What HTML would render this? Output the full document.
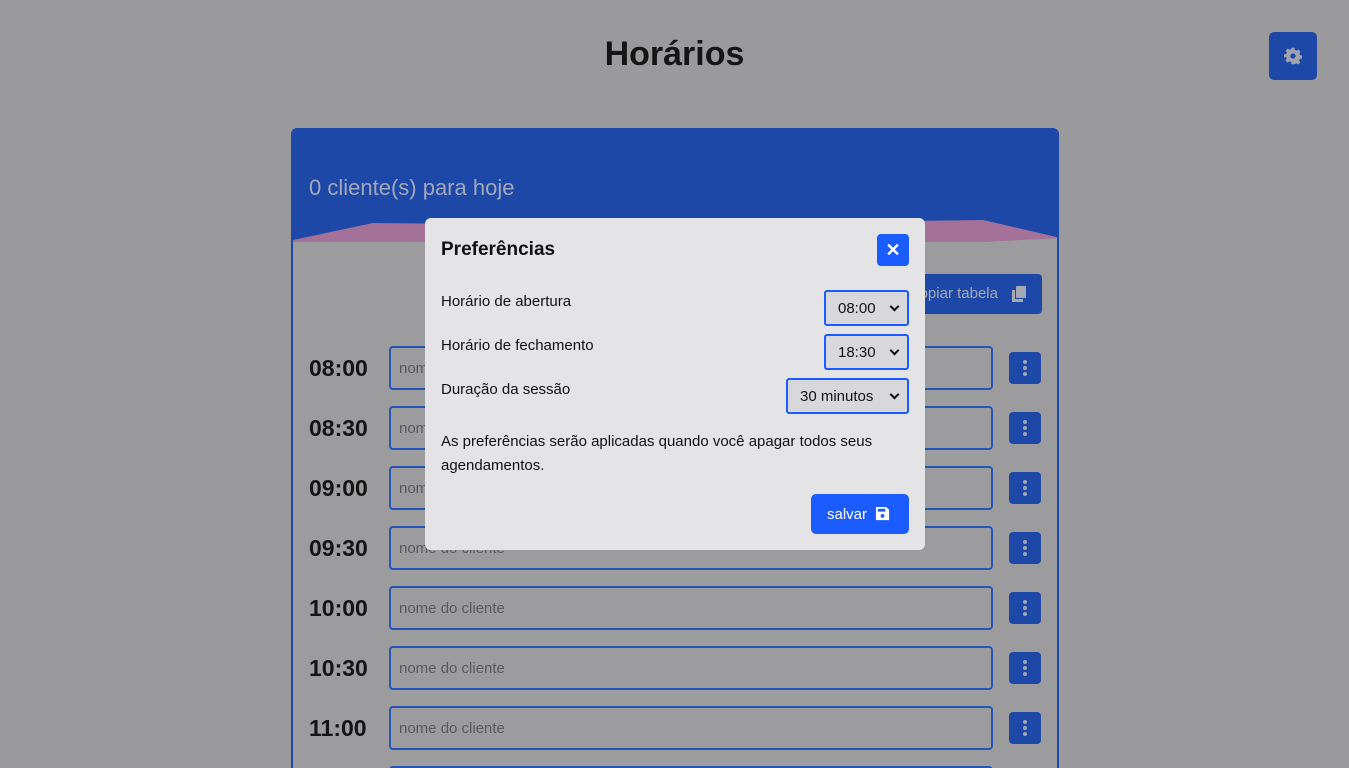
<!DOCTYPE html>
<html><head><meta charset="utf-8"><style>
*{box-sizing:border-box}
html,body{margin:0;width:1349px;height:768px;overflow:hidden}
body{background:#9a9a9c;font-family:"Liberation Sans",sans-serif;position:relative}
h1{position:absolute;left:0;right:0;top:35px;margin:0;text-align:center;font-size:34px;font-weight:bold;color:#151515}
.gear{position:absolute;left:1269px;top:32px;width:48px;height:48px;background:#1d48a8;border-radius:5px;display:flex;align-items:center;justify-content:center}
.card{position:absolute;left:291px;top:128px;width:768px;height:700px;border:2px solid #1d48a8;border-radius:6px;background:#9c9c9e;overflow:hidden}
.head{position:absolute;left:0;top:0;width:100%;height:112px;background:#1d48a8}
.head span{position:absolute;left:16px;top:45px;font-size:22px;color:#a3a8b8}
.wave{position:absolute;left:0;top:90px}
.copy{position:absolute;left:600px;top:144px;width:149px;height:40px;background:#1d48a8;border-radius:4px;color:#a5a8b5;font-size:15px;line-height:40px;text-align:right;padding-right:44px}
.copy svg{position:absolute;right:16px;top:12px}
.row{position:absolute;left:0;width:100%;height:44px}
.row b{position:absolute;left:16px;top:9px;font-size:23px;color:#141414}
.row .in{position:absolute;left:96px;top:0;width:604px;height:44px;border:2px solid #2456b8;border-radius:4px;color:#5a5a5c;font-size:15px;padding:12px 8px}
.row .dots{position:absolute;left:716px;top:6px;width:32px;height:32px;background:#1d48a8;border-radius:4px}
.row .dots i{position:absolute;left:14px;width:4px;height:4px;border-radius:2px;background:#a0a4b0}
.modal{position:absolute;left:425px;top:218px;width:500px;height:332px;background:#e4e4e6;border-radius:6px;color:#111}
.modal .t{position:absolute;left:16px;top:21px;font-size:19px;font-weight:bold}
.x{position:absolute;left:452px;top:16px;width:32px;height:32px;background:#1a5cff;border-radius:4px;color:#fff;font-weight:bold;text-align:center;line-height:32px;font-size:18px}
.lab{position:absolute;left:16px;font-size:15px}
.sel{position:absolute;height:36px;border:2px solid #1a5cff;border-radius:3px;background:#d8d8dc;font-size:15px;line-height:33px;padding-left:12px}
.sel:after{content:"";position:absolute;right:9px;top:11px;width:5px;height:5px;border-right:2px solid #111;border-bottom:2px solid #111;transform:rotate(45deg)}
.note{position:absolute;left:16px;top:212px;width:470px;font-size:15px;line-height:24px}
.save{position:absolute;left:386px;top:276px;width:98px;height:40px;background:#1a5cff;border-radius:5px;color:#fff;font-size:15px;line-height:41px;padding-left:16px}
</style></head><body>
<h1>Horários</h1>
<div class="gear"><svg width="18" height="18" viewBox="0 0 24 24"><path fill="#a0a3ad" d="M10 1h4l.6 3 2 1 2.6-1.6 2.8 2.8L20.4 8.8l1 2 2.6.6v4l-3 .6-.8 2 1.6 2.6-2.8 2.8-2.6-1.6-2 .8L14 23h-4l-.6-3-2-.8-2.6 1.6-2.8-2.8 1.6-2.6-.8-2L0 14v-4l3-.6.8-2L2.2 4.8 5 2 7.6 3.6l2-.8z"/><circle cx="12" cy="12" r="3.5" fill="#1d48a8"/></svg></div>
<div class="card">
<div class="head"><span>0 cliente(s) para hoje</span></div>
<svg class="wave" width="768" height="30"><path d="M0 20 L80 3 L300 5 L690 0 L768 18 L768 30 L0 30Z" fill="#a47198"/><path d="M0 22 L80 22 L300 22 L690 22 L768 18 L768 30 L0 30Z" fill="#9c9c9e"/></svg>
<div class="copy">opiar tabela<svg width="14" height="16" viewBox="0 0 14 16"><rect x="4" y="0" width="10" height="12" rx="1" fill="#a5a8b5"/><path d="M0 4h3v9h8v3H0z" fill="#a5a8b5"/></svg></div>
<div class="row" style="top:216px"><b>08:00</b><div class="in">nome do cliente</div><div class="dots"><i style="top:8px"></i><i style="top:14px"></i><i style="top:20px"></i></div></div>
<div class="row" style="top:276px"><b>08:30</b><div class="in">nome do cliente</div><div class="dots"><i style="top:8px"></i><i style="top:14px"></i><i style="top:20px"></i></div></div>
<div class="row" style="top:336px"><b>09:00</b><div class="in">nome do cliente</div><div class="dots"><i style="top:8px"></i><i style="top:14px"></i><i style="top:20px"></i></div></div>
<div class="row" style="top:396px"><b>09:30</b><div class="in">nome do cliente</div><div class="dots"><i style="top:8px"></i><i style="top:14px"></i><i style="top:20px"></i></div></div>
<div class="row" style="top:456px"><b>10:00</b><div class="in">nome do cliente</div><div class="dots"><i style="top:8px"></i><i style="top:14px"></i><i style="top:20px"></i></div></div>
<div class="row" style="top:516px"><b>10:30</b><div class="in">nome do cliente</div><div class="dots"><i style="top:8px"></i><i style="top:14px"></i><i style="top:20px"></i></div></div>
<div class="row" style="top:576px"><b>11:00</b><div class="in">nome do cliente</div><div class="dots"><i style="top:8px"></i><i style="top:14px"></i><i style="top:20px"></i></div></div>
<div class="row" style="top:636px"><b>11:30</b><div class="in">nome do cliente</div><div class="dots"><i style="top:8px"></i><i style="top:14px"></i><i style="top:20px"></i></div></div>
</div>
<div class="modal">
<div class="t">Preferências</div>
<div class="x">✕</div>
<div class="lab" style="top:75px">Horário de abertura</div>
<div class="sel" style="left:399px;top:72px;width:85px">08:00</div>
<div class="lab" style="top:119px">Horário de fechamento</div>
<div class="sel" style="left:399px;top:116px;width:85px">18:30</div>
<div class="lab" style="top:163px">Duração da sessão</div>
<div class="sel" style="left:361px;top:160px;width:123px">30 minutos</div>
<div class="note">As preferências serão aplicadas quando você apagar todos seus agendamentos.</div>
<div class="save">salvar <svg width="15" height="15" viewBox="0 0 16 16" style="vertical-align:-2px;margin-left:4px"><path fill="#fff" d="M1 1h11l3 3v11H1z"/><rect x="3" y="3" width="8" height="3" fill="#1a5cff"/><circle cx="8" cy="10.5" r="2" fill="#1a5cff"/></svg></div>
</div>
</body></html>
